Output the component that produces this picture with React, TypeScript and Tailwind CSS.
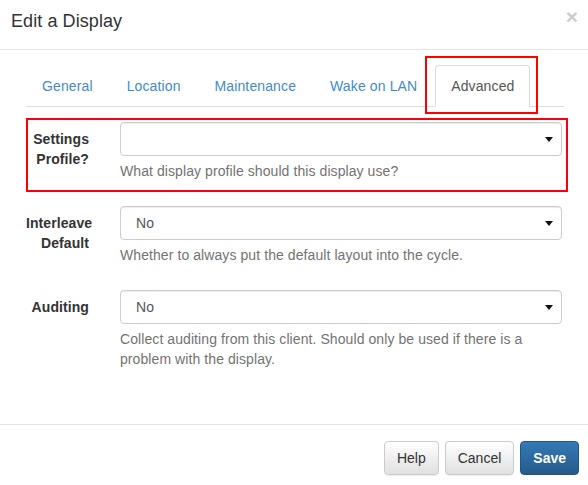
import { useState } from "react";

const tabs = ["General", "Location", "Maintenance", "Wake on LAN", "Advanced"];

function Caret() {
  return (
    <svg width="8" height="5" viewBox="0 0 8 5" className="shrink-0">
      <path d="M0 0 L8 0 L4 5 Z" fill="#111" />
    </svg>
  );
}

function FakeSelect({ value }: { value: string }) {
  return (
    <div className="h-[34px] w-[442px] flex items-center justify-between rounded-[4px] border border-[#ccc] bg-white pl-[15px] pr-[8px] shadow-[inset_0_1px_1px_rgba(0,0,0,0.075)] text-[#555]">
      <span className="leading-[20px]">{value}</span>
      <Caret />
    </div>
  );
}

function FormRow({
  label,
  value,
  help,
  highlight,
}: {
  label: string;
  value: string;
  help: string;
  highlight?: boolean;
}) {
  return (
    <div className="relative flex mb-[15px]">
      {highlight && (
        <div className="pointer-events-none absolute left-0 top-[-4px] w-[542px] bottom-[-1px] border-2 border-[#ff0000]" />
      )}
      <label className="w-[79px] shrink-0 pr-[16px] pt-[7px] text-right font-bold leading-[20px] text-[#333]">
        <span className="block w-[63px]">{label}</span>
      </label>
      <div className="ml-[15px]">
        <FakeSelect value={value} />
        <p className="mt-[5px] mb-[10px] w-[442px] leading-[20px] text-[#737373]">{help}</p>
      </div>
    </div>
  );
}

export default function App() {
  const [active] = useState("Advanced");

  return (
    <div className="relative h-[485px] w-[588px] overflow-hidden bg-white text-[14px] tracking-[0.08px] text-[#333] [font-family:'Liberation_Sans',Arial,sans-serif]">
      <header className="flex h-[50px] items-start justify-between border-b border-[#e5e5e5] pl-[11px] pr-[10px]">
        <h4 className="pt-[8px] text-[18px] leading-[26px] text-[#333]">Edit a Display</h4>
        <button className="pt-[7px] text-[21px] font-bold leading-[20px] text-black opacity-20">×</button>
      </header>

      <div className="px-[26px] pb-[30px]">
        <ul className="mt-[15px] flex w-[538px] border-b border-[#ddd] tracking-[0.12px]">
          {tabs.map((t) => {
            const on = t === active;
            return (
              <li key={t} className="relative mb-[-1px] mr-[2px]">
                <a
                  className={
                    on
                      ? "block rounded-t-[4px] border border-[#ddd] border-b-white bg-white px-[15px] py-[10px] leading-[20px] text-[#555]"
                      : "block rounded-t-[4px] border border-transparent px-[15px] py-[10px] leading-[20px] text-[#428bca]"
                  }
                >
                  {t}
                </a>
                {on && (
                  <div className="pointer-events-none absolute left-[-10px] right-[-8px] top-[-9px] bottom-[-7px] border-2 border-[#ff0000]" />
                )}
              </li>
            );
          })}
        </ul>

        <form className="pt-[15px]">
          <FormRow
            label="Settings Profile?"
            value=""
            help="What display profile should this display use?"
            highlight
          />
          <FormRow
            label="Interleave Default"
            value="No"
            help="Whether to always put the default layout into the cycle."
          />
          <FormRow
            label="Auditing"
            value="No"
            help="Collect auditing from this client. Should only be used if there is a problem with the display."
          />
        </form>
      </div>

      <footer className="flex justify-end gap-[6px] border-t border-[#e5e5e5] pt-[16px] pr-[9px] tracking-normal">
        <button className="rounded-[4px] border border-[#ccc] bg-[linear-gradient(to_bottom,#fff_0%,#e0e0e0_100%)] px-[12px] py-[6px] leading-[20px] text-[#333] shadow-[0_1px_1px_rgba(0,0,0,0.075)]">
          Help
        </button>
        <button className="rounded-[4px] border border-[#ccc] bg-[linear-gradient(to_bottom,#fff_0%,#e0e0e0_100%)] px-[12px] py-[6px] leading-[20px] text-[#333] shadow-[0_1px_1px_rgba(0,0,0,0.075)]">
          Cancel
        </button>
        <button className="rounded-[4px] border border-[#245580] bg-[linear-gradient(to_bottom,#337ab7_0%,#265a88_100%)] px-[12px] py-[6px] font-bold leading-[20px] text-white">
          Save
        </button>
      </footer>
    </div>
  );
}
